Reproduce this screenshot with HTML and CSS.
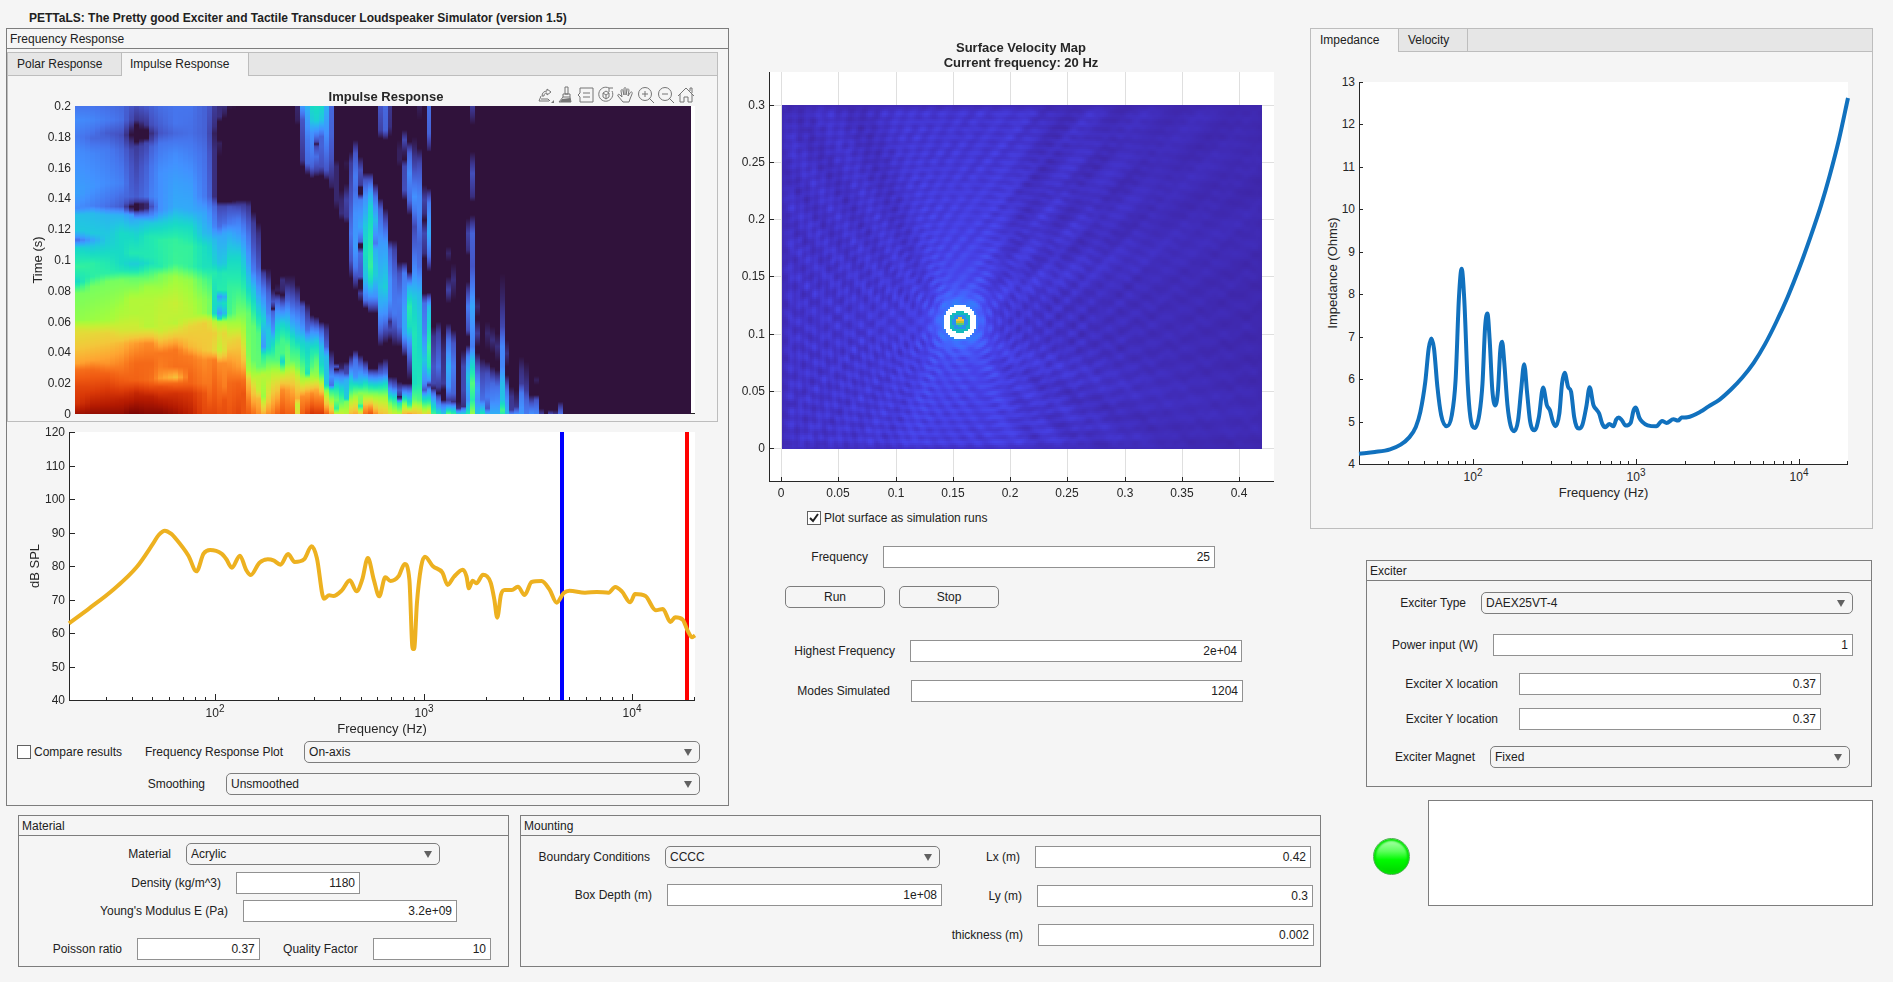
FILE: index.html
```html
<!DOCTYPE html>
<html lang="en">
<head>
    <meta charset="UTF-8">
    <meta name="viewport" content="width=device-width, initial-scale=1.0">
    <title>PETTaLS</title>
    <link rel="stylesheet" href="styles.css">
</head>
<body>
    <h1>PETTaLS: The Pretty good Exciter and Tactile Transducer Loudspeaker Simulator (version 1.5)</h1>
    <main class="app">
        <section class="panel response">
            <h2>Frequency Response</h2>
            <div class="tabgroup response-tabs">
                <div class="tabs" role="tablist">
                    <button class="tab tab-polar" role="tab">Polar Response</button>
                    <button class="tab tab-impulse active" role="tab" aria-selected="true">Impulse Response</button>
                </div>
                <div class="plot">
                    <canvas id="impulseMap" width="709" height="345"></canvas>
                    <svg id="impulseAxes" viewBox="0 0 709 345"></svg>
                    <div class="toolbar">
                        <button aria-label="Export"><svg viewBox="0 0 16 16"><path d="M3 9l-2 5h10M3 12h7l2 2M4 9c0-3 2-5 5-5V2l4 3-4 3V6c-2 0-3 1-3 3z"/><path class="solid" d="M16 13v3h-3z"/></svg></button>
                        <button aria-label="Brush"><svg viewBox="0 0 16 16"><path d="M7 0h3v7H7zM5 7h7v3H5zM5 10l-4 5h12l-1-5"/><path class="solid" d="M4 12l8-1 1 4H2z"/></svg></button>
                        <button aria-label="Data tips"><svg viewBox="0 0 16 16"><path d="M2 1h13v14H2v-5L0 8l2-2zM5 6h7M5 10h7"/></svg></button>
                        <button aria-label="Rotate"><svg viewBox="0 0 16 16"><path d="M11 1a7 7 0 1 0 3 3M11 5V1h4M8 4l3 2v4l-3 2-3-2V6zM5 6l3 2 3-2M8 8v4"/></svg></button>
                        <button aria-label="Pan"><svg viewBox="0 0 16 16"><path d="M5 15L0 9c-1-2 1-2 2-1l2 2-1-6c0-2 2-2 2 0l1 4V2c0-2 2-2 2 0v6l1-5c0-2 2-1 2 0l-1 6 2-3c1-2 3-1 2 1l-2 5-1 3z"/></svg></button>
                        <button aria-label="Zoom in"><svg viewBox="0 0 16 16"><circle cx="7" cy="7" r="6.500"/><path d="M11 11l5 5M4 7h6M7 4v6"/></svg></button>
                        <button aria-label="Zoom out"><svg viewBox="0 0 16 16"><circle cx="7" cy="7" r="6.500"/><path d="M11 11l5 5M4 7h6"/></svg></button>
                        <button aria-label="Restore view"><svg viewBox="0 0 16 16"><path d="M0 9l8-8 8 8M2 7v8h4v-5h4v5h4V7M12 4V1h2v5"/></svg></button>
                    </div>
                </div>
            </div>
            <div class="plot">
                <svg id="splAxes" viewBox="0 0 721 319"></svg>
            </div>
            <div class="row row-plot">
                <input type="checkbox" id="compare">
                <label class="check-label" for="compare">Compare results</label>
                <label for="responsePlot">Frequency Response Plot</label>
                <select id="responsePlot"><option>On-axis</option></select>
            </div>
            <div class="row row-smoothing">
                <label for="smoothing">Smoothing</label>
                <select id="smoothing"><option>Unsmoothed</option></select>
            </div>
        </section>

        <section class="surface">
            <div class="plot">
                <svg id="surfaceGrid" viewBox="0 0 581 477"></svg>
                <canvas id="surfaceMap" width="581" height="477"></canvas>
                <svg id="surfaceAxes" viewBox="0 0 581 477"></svg>
            </div>
            <div class="row row-live">
                <input type="checkbox" id="live" checked>
                <label class="check-label" for="live">Plot surface as simulation runs</label>
            </div>
            <div class="row row-frequency">
                <label for="frequency">Frequency</label>
                <input type="text" id="frequency" value="25">
            </div>
            <div class="row row-buttons">
                <button class="push">Run</button>
                <button class="push">Stop</button>
            </div>
            <div class="row row-highest">
                <label for="highest">Highest Frequency</label>
                <input type="text" id="highest" value="2e+04">
            </div>
            <div class="row row-modes">
                <label for="modes">Modes Simulated</label>
                <input type="text" id="modes" value="1204">
            </div>
        </section>

        <div class="side">
            <div class="tabgroup">
                <div class="tabs" role="tablist">
                    <button class="tab tab-impedance active" role="tab" aria-selected="true">Impedance</button>
                    <button class="tab tab-velocity" role="tab">Velocity</button>
                </div>
                <div class="plot">
                    <svg id="impedanceAxes" viewBox="0 0 561 476"></svg>
                </div>
            </div>
            <section class="panel exciter">
                <h2>Exciter</h2>
                <div class="row row-type">
                    <label for="exciterType">Exciter Type</label>
                    <select id="exciterType"><option>DAEX25VT-4</option></select>
                </div>
                <div class="row row-power">
                    <label for="power">Power input (W)</label>
                    <input type="text" id="power" value="1">
                </div>
                <div class="row row-location">
                    <label for="exciterX">Exciter X location</label>
                    <input type="text" id="exciterX" value="0.37">
                </div>
                <div class="row row-location">
                    <label for="exciterY">Exciter Y location</label>
                    <input type="text" id="exciterY" value="0.37">
                </div>
                <div class="row row-magnet">
                    <label for="magnet">Exciter Magnet</label>
                    <select id="magnet"><option>Fixed</option></select>
                </div>
            </section>
            <div class="status">
                <span class="lamp"></span>
                <textarea aria-label="Messages"></textarea>
            </div>
        </div>

        <div class="bottom">
            <section class="panel material">
                <h2>Material</h2>
                <div class="row row-material">
                    <label for="material">Material</label>
                    <select id="material"><option>Acrylic</option></select>
                </div>
                <div class="row row-density">
                    <label for="density">Density (kg/m^3)</label>
                    <input type="text" id="density" value="1180">
                </div>
                <div class="row row-young">
                    <label for="young">Young's Modulus E (Pa)</label>
                    <input type="text" id="young" value="3.2e+09">
                </div>
                <div class="row row-ratio">
                    <label class="poisson" for="poisson">Poisson ratio</label>
                    <input type="text" id="poisson" value="0.37">
                    <label class="quality" for="quality">Quality Factor</label>
                    <input type="text" id="quality" value="10">
                </div>
            </section>
            <section class="panel mounting">
                <h2>Mounting</h2>
                <div class="columns">
                    <div>
                        <div class="row row-boundary">
                            <label for="boundary">Boundary Conditions</label>
                            <select id="boundary"><option>CCCC</option></select>
                        </div>
                        <div class="row row-depth">
                            <label for="depth">Box Depth (m)</label>
                            <input type="text" id="depth" value="1e+08">
                        </div>
                    </div>
                    <div>
                        <div class="row row-lx">
                            <label for="lx">Lx (m)</label>
                            <input type="text" id="lx" value="0.42">
                        </div>
                        <div class="row row-ly">
                            <label for="ly">Ly (m)</label>
                            <input type="text" id="ly" value="0.3">
                        </div>
                        <div class="row row-thickness">
                            <label for="thickness">thickness (m)</label>
                            <input type="text" id="thickness" value="0.002">
                        </div>
                    </div>
                </div>
            </section>
        </div>
    </main>
    <script src="plots.js"></script>
</body>
</html>
```
FILE: styles.css
```css
* {
    box-sizing: border-box;
}

body {
    margin: 0;
    padding: 0 20px 15px 6px;
    background-color: #f5f5f5;
    color: #212121;
    font-family: "Liberation Sans", Arial, sans-serif;
    font-size: 12px;
    line-height: 14px;
}

h1 {
    margin: 0;
    padding: 11px 0 3px 23px;
    font-size: 12px;
    line-height: 14px;
}

input, select, button, textarea {
    margin: 0;
    font: inherit;
    color: inherit;
}

.app {
    display: grid;
    grid-template-columns: minmax(0, 723fr) minmax(0, 581fr) minmax(0, 11fr) minmax(0, 552fr);
    row-gap: 9px;
}

.response { grid-column: 1; grid-row: 1; }
.surface { grid-column: 2; grid-row: 1; }
.side { grid-column: 3 / 5; grid-row: 1 / 3; }
.bottom { grid-column: 1 / 4; grid-row: 2; }

/* panels */
.panel {
    border: 1px solid #7d7d7d;
}

.panel h2 {
    margin: 0;
    padding: 3px 3px 2px;
    border-bottom: 1px solid #7d7d7d;
    font-size: 12px;
    font-weight: normal;
    line-height: 14px;
}

.response { padding-bottom: 10px; }

/* tab groups */
.tabgroup {
    border: 1px solid #bdbdbd;
}

.response-tabs {
    margin: 3px 10px 0 0;
}

.tabs {
    display: flex;
    height: 23px;
    background-color: #e6e6e6;
    box-shadow: inset 0 -1px #bdbdbd;
}

.tab {
    padding: 0 0 1px 9px;
    border: 0;
    border-right: 1px solid #bdbdbd;
    background: none;
    text-align: left;
}

.tab.active {
    background-color: #f5f5f5;
}

.tab-polar { width: 114px; }
.tab-impulse { width: 127px; padding-left: 8px; }
.tab-impedance { width: 88px; }
.tab-velocity { width: 69px; }

/* plots: canvas and axes share one grid cell */
.plot {
    display: grid;
    position: relative;
}

.plot > canvas, .plot > svg {
    grid-area: 1 / 1;
    width: 100%;
    height: auto;
    display: block;
}

.plot text {
    fill: #262626;
    font-size: 12px;
}

.plot .axis-label { font-size: 13px; }
.plot .plot-title { font-size: 13px; font-weight: bold; }
.plot .exponent { font-size: 10px; }

.toolbar {
    position: absolute;
    top: 11px;
    right: 23px;
    display: flex;
    gap: 4px;
}

.toolbar button {
    width: 16px;
    height: 16px;
    padding: 0;
    border: 0;
    background: none;
}

.toolbar svg {
    display: block;
    width: 16px;
    height: 16px;
    overflow: visible;
    fill: none;
    stroke: #757575;
}

.toolbar .solid {
    fill: #757575;
    stroke: none;
}

/* form rows */
.row {
    display: flex;
    align-items: center;
    gap: 15px;
}

.row label {
    flex: none;
    text-align: right;
    white-space: nowrap;
}

.row input[type="text"], .row select {
    flex: 1 1 0;
    min-width: 0;
    height: 22px;
    padding: 0 4px;
}

input[type="text"] {
    border: 1px solid #919191;
    background-color: #fff;
    text-align: right;
}

select {
    appearance: none;
    border: 1px solid #7d7d7d;
    border-radius: 5px;
    background: #f5f5f5 url("data:image/svg+xml,%3Csvg xmlns='http://www.w3.org/2000/svg' width='8' height='7'%3E%3Cpath d='M0 0h8L4 7z' fill='%23616161'/%3E%3C/svg%3E") no-repeat right 7px center;
}

input[type="checkbox"] {
    appearance: none;
    flex: none;
    width: 14px;
    height: 14px;
    border: 1px solid #616161;
    background-color: #fff;
}

input[type="checkbox"]:checked {
    background: #fff url("data:image/svg+xml,%3Csvg xmlns='http://www.w3.org/2000/svg' width='12' height='12'%3E%3Cpath d='M2 6l3 3 5-7' fill='none' stroke='%23212121' stroke-width='2'/%3E%3C/svg%3E") no-repeat center;
}

.push {
    width: 100px;
    height: 22px;
    padding: 0;
    border: 1px solid #7d7d7d;
    border-radius: 5px;
    background-color: #f5f5f5;
}

/* frequency response */
.row-plot { gap: 21px; padding: 0 28px 0 10px; }
.row-plot .check-label { margin: 0 2px 0 -18px; }
.row-smoothing { gap: 21px; margin-top: 10px; padding-right: 28px; }
.row-smoothing label { width: 198px; }

/* surface velocity */
.row-live { gap: 3px; margin-top: 6px; padding-left: 78px; }
.row-frequency { margin-top: 21px; padding-right: 95px; }
.row-frequency label { width: 139px; }
.row-buttons { gap: 14px; margin-top: 18px; padding-left: 56px; }
.row-highest { margin-top: 32px; padding-right: 68px; }
.row-highest label { width: 166px; }
.row-modes { gap: 21px; margin-top: 18px; padding-right: 67px; }
.row-modes label { width: 161px; }

/* exciter */
.exciter { margin: 31px 1px 0 56px; padding-bottom: 18px; }
.row-type { margin-top: 11px; padding-right: 18px; }
.row-type label { width: 99px; }
.row-power { margin-top: 20px; padding-right: 18px; }
.row-power label { width: 111px; }
.row-location { gap: 21px; margin-top: 17px; padding-right: 50px; }
.row-location + .row-location { margin-top: 13px; }
.row-location label { width: 131px; }
.row-magnet { margin-top: 16px; padding-right: 21px; }
.row-magnet label { width: 108px; }

.status {
    display: flex;
    align-items: center;
    gap: 18px;
    margin: 13px 0 0 63px;
}

.lamp {
    flex: none;
    width: 37px;
    height: 37px;
    margin-top: 6px;
    border: 1px solid #4caf50;
    border-radius: 50%;
    background: linear-gradient(#b4ffb4, #5cff5c 35%, #00fa00 60%, #00d200);
    box-shadow: inset 0 0 2px 2px #00e600;
}

textarea {
    flex: 1;
    min-width: 0;
    height: 106px;
    border: 1px solid #7d7d7d;
    background-color: #fff;
    resize: none;
}

/* material and mounting */
.bottom {
    display: grid;
    grid-template-columns: minmax(0, 491fr) minmax(0, 801fr);
    gap: 11px;
    padding-left: 12px;
}

.material { padding-bottom: 6px; }
.row-material { margin-top: 7px; padding-right: 68px; }
.row-material label { width: 152px; }
.row-density { margin-top: 7px; padding-right: 148px; }
.row-density label { width: 202px; }
.row-young { margin-top: 6px; padding-right: 51px; }
.row-young label { width: 209px; }
.row-ratio { margin-top: 16px; padding-right: 17px; }
.row-ratio .poisson { width: 103px; }
.row-ratio .quality { width: 83px; }
.row-ratio #poisson { flex-grow: 123; }
.row-ratio #quality { flex-grow: 118; }

.columns {
    display: grid;
    grid-template-columns: minmax(0, 422fr) minmax(0, 377fr);
}

.row-boundary { margin-top: 10px; padding-right: 3px; }
.row-boundary label { width: 129px; }
.row-depth { margin-top: 16px; padding-right: 1px; }
.row-depth label { width: 131px; }
.row-lx { margin-top: 10px; padding-right: 9px; }
.row-lx label { width: 77px; }
.row-ly { margin-top: 17px; padding-right: 7px; }
.row-ly label { width: 79px; }
.row-thickness { margin-top: 17px; padding-right: 6px; }
.row-thickness label { width: 80px; }
```
FILE: plots.js
```js
const SVG = 'http://www.w3.org/2000/svg';
const INK = '#262626';

function add(svg, tag, attrs, text) {
    const el = document.createElementNS(SVG, tag);
    for (const name in attrs) el.setAttribute(name, attrs[name]);
    if (text !== undefined) el.textContent = text;
    svg.appendChild(el);
    return el;
}

function hline(svg, x, y, w, color = INK) {
    add(svg, 'rect', { x: Math.round(x), y: Math.round(y), width: w, height: 1, fill: color });
}

function vline(svg, x, y, h, color = INK) {
    add(svg, 'rect', { x: Math.round(x), y: Math.round(y), width: 1, height: h, fill: color });
}

function yLabels(svg, box, labels, tick) {
    labels.forEach((label, i) => {
        const y = box.y + box.h - box.h * i / (labels.length - 1);
        add(svg, 'text', { x: box.x - 4, y: Math.round(y) + 4, 'text-anchor': 'end' }, label);
        if (tick) hline(svg, box.x, y, tick);
    });
}

function yTitle(svg, x, y, text) {
    add(svg, 'text', { class: 'axis-label', 'text-anchor': 'middle', transform: `translate(${x} ${y}) rotate(-90)` }, text);
}

// 20 Hz to 20 kHz
function logAxis(svg, box, major, minor) {
    const bottom = box.y + box.h;
    const pos = f => box.x + box.w * Math.log10(f / 20) / 3;
    hline(svg, box.x, bottom, box.w);
    for (let exp = 1; exp <= 4; exp++) {
        for (let n = 1; n <= 9; n++) {
            const f = n * 10 ** exp;
            if (f < 30 || f > 20000) continue;
            const len = n === 1 ? major : minor;
            vline(svg, Math.min(pos(f), box.x + box.w - 1), bottom - len, len);
        }
        if (exp > 1) {
            const t = add(svg, 'text', { x: Math.round(pos(10 ** exp)), y: bottom + 17, 'text-anchor': 'middle' }, '10');
            add(t, 'tspan', { class: 'exponent', dy: -5 }, exp);
        }
    }
    add(svg, 'text', { class: 'axis-label', x: box.x + box.w / 2, y: bottom + 33, 'text-anchor': 'middle' }, 'Frequency (Hz)');
}

// cubic through the points, flat at every peak and dip
function curve(points) {
    const slope = (a, b) => (b[1] - a[1]) / (b[0] - a[0]);
    const m = points.map((p, i) => {
        if (i === 0) return slope(p, points[1]);
        if (i === points.length - 1) return slope(points[i - 1], p);
        const a = slope(points[i - 1], p), b = slope(p, points[i + 1]);
        if (a * b <= 0) return 0;
        return Math.sign(a) * Math.min(Math.abs(a + b) / 2, 3 * Math.abs(a), 3 * Math.abs(b));
    });
    let d = `M${points[0]}`;
    for (let i = 1; i < points.length; i++) {
        const [x0, y0] = points[i - 1], [x1, y1] = points[i];
        const h = (x1 - x0) / 3;
        d += `C${x0 + h},${y0 + m[i - 1] * h} ${x1 - h},${y1 - m[i] * h} ${x1},${y1}`;
    }
    return d;
}

// traces are digitised; range holds the axis limits in digitiser units
function trace(svg, box, data, range, color) {
    const [x0, x1, y0, y1] = range;
    const points = data.trim().split(/\s+/).map(p => {
        const [x, y] = p.split(',').map(Number);
        return [box.x + (x - x0) / (x1 - x0) * box.w, box.y + (y - y0) / (y1 - y0) * box.h];
    });
    add(svg, 'path', { d: curve(points), fill: 'none', stroke: color, 'stroke-width': 4, 'stroke-linejoin': 'round' });
}

function colorAt(map, v) {
    const p = Math.max(0, Math.min(1, v)) * (map.length - 1);
    const i = Math.min(Math.floor(p), map.length - 2);
    return map[i].map((c, k) => c + (map[i + 1][k] - c) * (p - i));
}

const TURBO = [[48,18,59],[60,53,141],[69,85,198],[70,117,237],[66,145,255],[50,170,248],[34,197,226],
    [24,218,198],[37,235,172],[73,248,134],[118,254,96],[164,252,60],[199,239,52],[226,220,56],[243,199,58],
    [254,164,49],[250,125,32],[240,91,18],[217,56,7],[180,26,1],[122,4,3]];
const PARULA = [[62,38,168],[66,50,200],[71,66,232],[71,91,250],[62,111,255],[46,132,248],[39,151,235],
    [25,168,220],[7,181,200],[42,193,170],[80,202,130],[140,203,80],[190,195,50],[238,186,52],[254,200,56],[249,251,20]];

/* Impulse response */

// "column| time:level ..." - time runs from 18 (0.2 s) to 942 (0 s), level is percent
const impulse = `
0|18:15 60:19 110:16 150:19 280:23 325:19 345:29 390:31 410:22 420:14 432:24 445:34 500:42 530:38 545:35 560:42 580:50 660:53 690:64 790:75 810:82 860:88 910:91 942:97
3|18:15 60:18 115:13 160:18 260:21 318:17 340:28 400:31 420:24 440:31 490:41 530:41 560:50 660:54 700:66 780:75 810:83 870:89 942:98
6|18:14 60:16 100:11 150:16 250:19 320:14 345:27 410:31 430:32 490:39 520:41 545:50 660:55 700:67 790:77 820:84 870:90 942:98
9|18:13 60:14 105:9 150:13 250:17 320:11 345:26 400:35 490:35 510:38 540:50 650:57 690:62 730:72 790:79 850:86 900:94 942:98
11|18:10 60:8 90:2 105:0 120:3 150:8 200:10 290:12 310:6 320:0 332:6 345:22 400:34 460:39 492:32 510:37 535:48 600:57 640:57 690:62 730:75 790:82 840:84 880:92 942:100
12|18:9 60:5 75:0 125:0 140:6 200:8 290:11 305:6 312:0 330:0 338:9 360:26 400:33 460:39 492:32 510:37 535:48 600:57 640:57 690:62 730:76 790:83 840:84 880:93 942:100
14|18:11 75:5 90:0 115:0 130:8 200:12 290:14 312:3 325:3 340:13 365:29 410:38 470:39 490:35 530:47 560:54 600:57 680:58 730:78 790:83 840:83 890:94 942:99
15|18:12 75:9 100:4 120:7 140:12 200:15 290:17 320:9 345:18 370:31 410:39 470:39 490:37 530:48 560:54 600:57 680:58 730:78 790:83 840:82 890:94 942:99
17|18:14 70:12 100:10 130:15 220:20 300:20 330:20 370:32 420:41 500:40 525:50 600:58 690:60 720:70 760:81 800:80 835:76 860:87 900:94 942:99
20|18:15 70:15 100:13 160:19 250:23 320:25 360:33 420:42 490:43 530:54 610:60 670:58 720:73 750:81 800:82 832:71 850:83 880:91 942:97
23|18:15 100:14 160:17 250:22 330:25 380:35 440:42 500:42 540:53 620:57 650:58 680:67 740:72 770:80 820:83 850:84 880:90 942:94
26|18:12 100:12 160:14 290:16 340:24 400:28 440:36 500:37 540:46 600:52 640:53 670:68 750:70 780:78 850:81 880:86 942:88
27|18:10 100:8 160:10 290:12 330:19 400:27 440:34 500:37 540:44 600:50 640:50 665:64 700:69 750:69 780:79 850:81 942:88
28|18:6 80:4 100:2 150:4 290:4 320:13 380:18 420:28 490:33 520:40 590:36 640:34 665:58 700:68 750:66 780:80 942:88
29|18:4 50:4 65:0 120:0 130:2 170:0 305:0 320:8 380:14 410:25 490:30 520:38 570:40 590:22 610:34 640:22 655:34 665:55 700:64 750:60 790:78 860:82 942:87
30|18:4 40:2 55:0 305:0 320:8 370:14 400:24 490:31 520:39 570:40 590:26 610:36 640:28 665:55 700:66 750:64 790:78 860:80 900:86 942:87
31|18:1 30:0 305:0 320:9 370:16 400:25 480:35 560:42 640:44 665:54 720:66 790:77 850:83 942:86
33|18:0 300:0 320:8 360:16 400:22 470:34 560:42 640:50 680:57 720:68 800:76 850:84 942:88
34|300:0 315:6 360:13 400:19 470:29 560:40 640:50 720:60 780:70 840:82 880:86 942:86
35|300:0 320:5 400:14 480:22 560:33 640:48 760:51 810:55 840:70 900:80 942:85
36|335:0 370:6 440:10 510:16 560:28 620:38 680:48 780:48 820:55 870:68 942:82
37|368:0 400:4 500:10 550:18 600:27 650:36 700:46 800:48 830:58 870:60 895:72 942:78
38|505:0 520:6 570:16 620:25 660:33 710:25 740:22 765:40 800:48 825:58 890:54 910:62 942:74
39|505:0 530:3 580:12 640:18 690:30 740:32 770:44 820:56 880:64 942:78
40|565:0 580:3 605:10 620:4 627:0 635:12 690:20 720:32 780:46 820:58 880:70 942:80
41|550:0 570:2 580:0 600:10 640:22 680:33 740:44 780:46 820:58 860:68 942:84
42|528:0 540:4 570:3 585:0 600:6 620:14 670:33 720:44 760:45 785:34 800:45 825:60 870:78 942:86
43|525:0 550:3 600:12 650:26 700:38 740:46 790:50 825:62 870:76 942:84
44|525:0 560:4 620:14 680:27 720:38 780:47 820:62 870:74 942:84
45|18:3 60:2 75:0 555:0 600:8 660:20 700:28 750:42 800:50 830:60 870:70 895:74 915:60 942:66
46|18:22 60:10 180:5 200:0 600:0 620:10 680:20 720:32 780:42 820:50 850:60 890:78 942:84
47|18:27 60:22 120:16 190:13 215:3 225:0 610:0 640:6 690:14 730:32 800:40 820:38 835:55 880:76 942:88
48|18:35 60:31 100:20 160:16 200:12 230:2 235:0 645:0 660:6 700:22 750:38 800:46 840:58 880:78 942:91
49|18:36 60:33 100:18 125:8 132:1 140:8 170:14 210:7 230:0 650:0 670:8 720:30 780:46 830:54 870:74 942:90
50|18:35 60:30 110:12 140:12 200:9 228:0 665:0 690:12 740:28 790:34 820:42 850:58 890:78 942:90
51|18:26 80:22 150:15 210:10 240:0 668:0 690:5 740:12 770:28 850:30 870:50 920:74 942:84
52|18:13 100:12 180:9 260:2 268:0 750:0 790:8 830:20 856:14 870:40 900:55 942:76
53|180:0 200:3 300:3 330:0 790:0 800:10 808:0 825:16 870:40 900:50 925:42 942:60
54|270:0 300:3 340:4 360:0 785:0 805:3 830:18 870:35 900:45 942:60
55|178:0 190:1 215:0 250:0 300:7 350:5 370:0 785:0 800:6 820:8 840:26 895:32 905:50 942:58
56|155:0 190:6 300:10 400:15 480:10 535:0 765:0 790:10 830:28 870:42 900:56 942:72
57|120:0 160:10 230:16 270:14 340:20 440:22 500:16 570:0 750:0 780:14 830:20 860:40 890:55 942:74
58|170:0 210:9 255:6 262:0 282:0 300:17 380:24 425:12 432:0 442:0 460:14 530:10 542:0 565:0 580:6 605:0 765:0 800:14 850:32 880:52 910:50 918:40 930:55 942:68
59|218:0 240:10 290:20 380:31 460:36 540:28 600:15 625:0 780:0 820:18 850:36 890:56 920:74 942:82
60|218:0 240:10 280:24 320:33 400:38 500:42 540:36 590:20 640:0 805:0 830:18 860:38 890:56 920:76 942:86
61|250:0 290:14 360:28 430:16 450:26 520:32 590:20 640:0 805:0 840:24 880:50 942:78
62|18:10 90:7 115:0 295:0 330:12 430:22 560:30 620:24 690:12 740:0 785:0 820:12 860:38 890:54 942:72
63|18:13 90:12 120:0 325:0 360:8 430:22 560:32 640:20 730:0 775:0 820:14 850:34 890:54 942:70
64|18:5 80:4 110:0 420:0 450:12 540:20 600:20 650:12 665:4 690:8 720:0 830:0 860:16 890:36 910:50 942:64
65|420:0 450:7 540:14 640:16 740:0 830:0 860:12 900:40 942:60
66|120:0 150:2 180:2 200:0 485:0 520:9 600:16 680:14 740:0 845:0 870:10 886:6 890:0 897:6 910:38 942:58
67|90:0 120:8 155:2 178:0 200:8 270:9 300:0 485:0 520:16 600:20 640:24 700:24 770:0 850:0 880:22 910:50 942:72
68|125:0 160:12 220:19 300:13 345:0 515:0 560:26 620:40 680:36 730:20 790:8 840:0 850:0 880:20 915:42 942:76
69|110:0 150:3 200:8 290:20 330:16 380:8 440:12 520:20 600:32 700:38 850:36 900:48 942:72
70|18:2 60:0 145:0 190:8 290:18 330:18 430:12 500:14 580:28 700:34 850:38 900:46 942:70
71|255:0 300:7 340:4 360:0 400:8 460:4 475:0 580:0 610:14 700:18 780:30 850:18 870:10 890:30 942:64
72|18:14 100:12 150:2 155:0 265:0 310:16 400:25 470:14 515:0 578:0 620:28 740:42 800:38 840:22 855:4 870:20 910:44 942:68
73|680:0 710:5 800:10 850:8 865:2 880:14 910:30 942:44
74|665:0 700:7 800:14 860:6 880:0 890:8 920:22 942:38
75|700:0 760:4 850:6 870:0 900:0 915:16 942:30
76|440:0 460:3 485:0 530:0 570:7 610:0 670:0 720:14 800:26 860:20 900:6 910:12 942:48
77|490:0 540:4 600:0 690:0 730:10 800:16 880:12 905:4 920:22 942:42
78|905:0 925:4 942:32
79|750:0 800:8 870:8 920:4 925:14 942:32
80|355:0 400:7 450:4 465:0 545:0 580:8 620:16 690:9 710:0 735:0 770:18 830:30 900:20 942:40
81|18:6 50:3 75:0 155:0 220:9 290:4 305:0 345:0 400:12 500:10 560:16 620:24 740:16 780:30 850:46 900:40 942:54
82|590:0 620:3 650:0 660:0 700:6 740:0 758:0 800:10 870:24 900:20 942:30
83|775:0 820:8 900:14 942:38
84|665:0 700:3 750:0 785:0 820:9 890:16 925:10 942:26
85|680:0 720:4 760:0 800:0 850:13 900:18 942:26
86|700:0 740:4 785:0 810:0 860:14 910:20 942:26
87|520:0 600:3 680:8 740:18 800:18 850:28 900:30 930:44 942:40
88|720:0 760:4 800:0 825:0 870:14 942:28
89|860:0 890:5 930:6 942:18
90|870:0 920:5 942:20
91|770:0 810:4 850:6 880:16 942:22
92|785:0 830:3 870:6 900:12 942:16
93|885:0 910:10 942:20
94|828:0 840:2 855:0 885:0 900:10 942:18
95|925:0 942:6
96|942:0
97|930:0 942:8
98|930:0 942:5
99|905:0 930:10 942:14
100|942:0
127|942:0`.trim().split('\n').map(line => {
    const [col, data] = line.split('|');
    return { col: Number(col), levels: data.split(' ').map(p => p.split(':').map(Number)) };
});

function levelAt(levels, t) {
    if (t <= levels[0][0]) return levels[0][1];
    for (let i = 1; i < levels.length; i++) {
        const [t0, v0] = levels[i - 1], [t1, v1] = levels[i];
        if (t <= t1) return v0 + (v1 - v0) * (t - t0) / (t1 - t0);
    }
    return levels[levels.length - 1][1];
}

function drawImpulse() {
    const box = { x: 67, y: 30, w: 616, h: 308 };
    const ctx = document.getElementById('impulseMap').getContext('2d');
    ctx.fillStyle = '#fff';
    ctx.fillRect(box.x, box.y, 620, box.h);
    const img = ctx.createImageData(box.w, box.h);
    for (let x = 0; x < box.w; x++) {
        const col = Math.floor(x / 4.876);
        const k = Math.max(1, impulse.findIndex(c => c.col >= col));
        const a = impulse[k - 1], b = impulse[k];
        const mix = (col - a.col) / (b.col - a.col);
        for (let y = 0; y < box.h; y++) {
            const t = 18 + 924 * (y + 0.5) / box.h;
            const v = levelAt(a.levels, t) * (1 - mix) + levelAt(b.levels, t) * mix;
            img.data.set([...colorAt(TURBO, v / 100), 255], (y * box.w + x) * 4);
        }
    }
    ctx.putImageData(img, box.x, box.y);

    const svg = document.getElementById('impulseAxes');
    hline(svg, box.x + box.w, box.y + box.h - 1, 4);
    yLabels(svg, box, ['0', '0.02', '0.04', '0.06', '0.08', '0.1', '0.12', '0.14', '0.16', '0.18', '0.2']);
    yTitle(svg, 34, box.y + box.h / 2, 'Time (s)');
    add(svg, 'text', { class: 'plot-title', x: box.x + 311, y: 25, 'text-anchor': 'middle' }, 'Impulse Response');
}

/* Sound pressure level */

function drawSpl() {
    const box = { x: 62, y: 10, w: 626, h: 268 };
    const svg = document.getElementById('splAxes');
    add(svg, 'rect', { x: box.x, y: box.y, width: box.w, height: box.h, fill: '#fff' });
    vline(svg, box.x, box.y, box.h);
    yLabels(svg, box, [40, 50, 60, 70, 80, 90, 100, 110, 120], 6);
    logAxis(svg, box, 6, 3);
    yTitle(svg, 32, box.y + box.h / 2, 'dB SPL');
    add(svg, 'rect', { x: 553, y: box.y, width: 4, height: box.h, fill: '#00f' });
    add(svg, 'rect', { x: 678, y: box.y, width: 4, height: box.h, fill: '#f00' });
    trace(svg, box, `147,641 190,596 240,541 290,473 325,402 337,376 350,363 363,372 375,390 400,438 417,485 432,432
        446,421 470,432 480,448 492,474 509,438 522,480 532,496 550,460 568,449 580,452 595,465 611,433 625,457
        645,449 661,410 672,445 687,567 698,557 707,559 725,542 742,512 756,545 768,510 780,445 793,512 804,560
        817,503 828,514 845,500 858,463 868,510 875,718 878,718 884,580 893,470 901,441 918,470 938,489 949,526
        962,502 981,480 989,500 994,536 1002,513 1010,521 1024,495 1040,518 1048,570 1054,624 1062,555 1070,541
        1085,541 1098,531 1112,556 1127,517 1148,514 1165,540 1180,579 1195,550 1207,543 1240,549 1265,547
        1290,549 1304,532 1318,545 1336,578 1346,553 1368,559 1390,602 1405,598 1421,637 1431,623 1447,630
        1458,665 1467,683 1473,677`, [147, 1473, 67, 871], '#edb120');
}

/* Impedance */

function drawImpedance() {
    const box = { x: 48, y: 30, w: 489, h: 382 };
    const svg = document.getElementById('impedanceAxes');
    add(svg, 'rect', { x: box.x, y: box.y, width: box.w, height: box.h, fill: '#fff' });
    vline(svg, box.x, box.y, box.h);
    yLabels(svg, box, [4, 5, 6, 7, 8, 9, 10, 11, 12, 13], 4);
    logAxis(svg, box, 5, 3);
    yTitle(svg, 26, box.y + box.h / 2, 'Impedance (Ohms)');
    trace(svg, box, `158,1300 200,1295 240,1287 268,1273 290,1252 308,1220 320,1175 333,1085 342,985 349,955 356,985
        365,1100 375,1185 390,1218 403,1185 413,1080 422,830 429,746 436,840 445,1090 452,1190 464,1223 476,1180
        484,1090 491,920 497,880 503,960 510,1110 518,1156 525,1110 531,990 536,965 541,1020 550,1155 558,1215
        568,1233 578,1200 586,1110 594,1032 602,1120 610,1205 622,1230 633,1190 644,1102 654,1155 662,1170 670,1205
        677,1218 687,1180 694,1090 701,1058 710,1100 718,1115 726,1190 732,1218 739,1225 748,1213 758,1160
        767,1101 777,1155 784,1167 792,1180 800,1210 808,1221 819,1211 830,1218 837,1198 844,1192 852,1200
        862,1216 875,1208 883,1170 889,1162 898,1192 906,1205 920,1215 943,1218 958,1202 970,1208 988,1197
        1000,1201 1010,1192 1025,1191 1060,1174 1080,1159 1110,1138 1140,1108 1170,1072 1200,1028 1230,972
        1260,905 1290,830 1320,745 1350,651 1378,556 1400,470 1425,360 1449,235`, [158, 1449, 187, 1331], '#1171be');
}

/* Surface velocity */

function velocity(x, y, w, h) {
    const sx = 177, sy = 216;
    const dx = x - sx, dy = y - sy;
    const r = Math.hypot(dx, dy);
    const vertical = Math.exp(-Math.pow(dx / (20 + Math.abs(dy) * (dy > 0 ? 0.5 : 0.15)), 2));
    let v = 0.045 + 0.09 * Math.exp(-r / 95) + 0.06 * vertical * Math.exp(-r / 300);
    v += 0.02 * Math.exp(-Math.hypot(x - 80, y - 300) / 140) - 0.03 * Math.max(0, (x - 240) / 240);
    const k = 0.4;
    const wave = Math.cos(r * 0.8);
    const direct = k * r;
    const bottom = Math.cos(direct - k * Math.hypot(dx, 2 * h - sy - y));
    const top = Math.cos(direct - k * Math.hypot(dx, y + sy));
    const left = Math.cos(direct - k * Math.hypot(x + sx, dy));
    const corner = Math.cos(x * k) * Math.cos(y * k) * Math.cos((x + y) * 0.06);
    const ripple = 0.018 * bottom + 0.012 * top + 0.015 * left + 0.014 * corner;
    v += ripple * (x > 280 ? Math.max(0.45, 1 - (x - 280) / 200) : 1);
    v += 0.035 * Math.exp(-r / 50) * wave;
    const edge = Math.min(x, y, w - x, h - y);
    return Math.max(0, v) * Math.min(1, 0.3 + edge / 7) + 0.3 * Math.exp(-Math.pow(r / 20, 2));
}

function drawSurface() {
    const box = { x: 40, y: 44, w: 505, h: 410 };
    const map = { x: 53, y: 77, w: 480, h: 344 };
    const grid = document.getElementById('surfaceGrid');
    const svg = document.getElementById('surfaceAxes');
    add(grid, 'rect', { x: box.x, y: box.y, width: box.w, height: box.h, fill: '#fff' });
    vline(svg, box.x, box.y, box.h);
    hline(svg, box.x, box.y + box.h - 1, box.w);
    ['0', '0.05', '0.1', '0.15', '0.2', '0.25', '0.3', '0.35', '0.4'].forEach((label, i) => {
        const x = 52 + i * 57.25;
        vline(grid, x, box.y, box.h, '#dfdfdf');
        vline(svg, x, box.y + box.h - 5, 5);
        add(svg, 'text', { x: Math.round(x), y: box.y + box.h + 15, 'text-anchor': 'middle' }, label);
        if (i > 6) return;
        const y = 420 - i * 57.25;
        hline(grid, box.x, y, box.w, '#dfdfdf');
        hline(svg, box.x, y, 5);
        add(svg, 'text', { x: box.x - 4, y: Math.round(y) + 4, 'text-anchor': 'end' }, label);
    });
    add(svg, 'text', { class: 'plot-title', x: 292, y: 24, 'text-anchor': 'middle' }, 'Surface Velocity Map');
    add(svg, 'text', { class: 'plot-title', x: 292, y: 39, 'text-anchor': 'middle' }, 'Current frequency: 20 Hz');

    const ctx = document.getElementById('surfaceMap').getContext('2d');
    const img = ctx.createImageData(map.w, map.h);
    for (let y = 0; y < map.h; y++) {
        for (let x = 0; x < map.w; x++) {
            const qx = Math.floor(x / 2) * 2, qy = Math.floor(y / 2) * 2;
            const r = Math.hypot(qx - 177, qy - 216);
            let rgb = colorAt(PARULA, velocity(qx, qy, map.w, map.h));
            // exciter footprint: voice coil ring and its centre
            if (r < 17) rgb = [255, 255, 255];
            if (r < 11) rgb = colorAt(PARULA, r > 8 ? 0.56 : 0.38);
            if (r < 5) rgb = colorAt(PARULA, 0.92 - Math.max(0, qy - 214) * 0.06);
            img.data.set([...rgb, 255], (y * map.w + x) * 4);
        }
    }
    ctx.putImageData(img, map.x, map.y);
}

drawImpulse();
drawSpl();
drawImpedance();
drawSurface();
```
